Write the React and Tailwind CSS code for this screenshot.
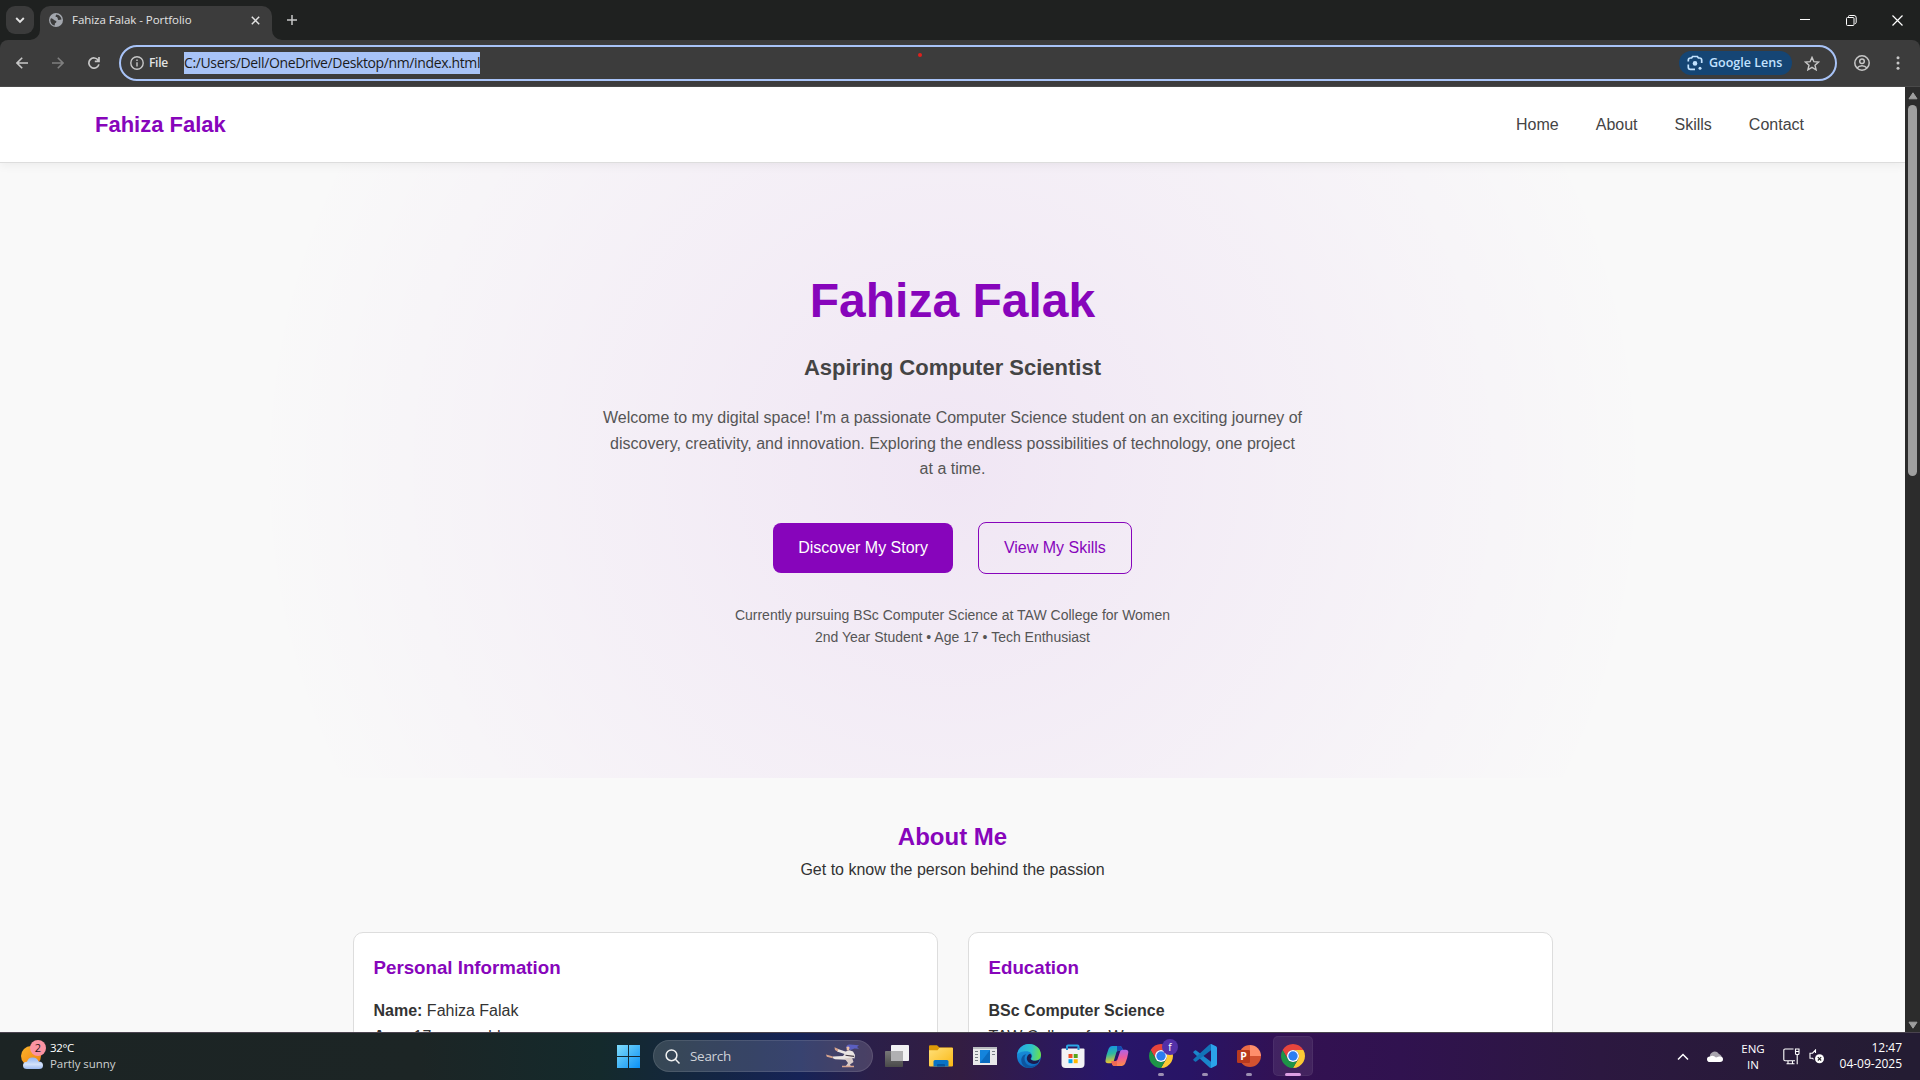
import React from "react";

const ui = "font-['Open_Sans','Noto_Sans',sans-serif]";

/* ---------- browser chrome ---------- */

function TabStrip() {
  return (
    <div className="flex h-10 items-start bg-[#1f2120]">
      <div className="ml-[6px] mt-[6px] flex h-7 w-7 items-center justify-center rounded-[9px] bg-[#3b3b3b]">
        <svg width="10" height="8" viewBox="0 0 10 8" fill="none" stroke="#e3e3e3" strokeWidth="1.9">
          <path d="M1.2 2 5 5.8 8.8 2" />
        </svg>
      </div>
      <svg className="-ml-[4px] mt-[30px] h-[10px] w-[10px]" viewBox="0 0 10 10">
        <path d="M0 10A10 10 0 0 0 10 0V10Z" fill="#3c3c3c" />
      </svg>
      <div className="mt-[6px] flex h-[34px] w-[232px] items-center rounded-t-[10px] bg-[#3c3c3c] pb-[6px]">
        <svg className="ml-[9px]" width="14" height="14" viewBox="0 0 14 14">
          <circle cx="7" cy="7" r="7" fill="#a3a7ae" />
          <path d="M2 5.2c1.5.2 2.3.9 3.2 1.8.9.8 2 .5 2.2 1.4.3 1.2-1.4 1.3-1.6 2.4-.1.9.4 1.6-.4 1.8C3.200 12 1.300 9.800 1.300 7.200c0-.8.3-1.500.7-2ZM7.200 1.400c-.3 1-.9 1.300-.6 2.200.3.800 1.500.5 2 1.300.5.900-.1 1.800 1 2.100 1.100.2 1.600-.6 2.900-.4C12.400 4 10.300 1.600 7.200 1.400Z" fill="#3c3c3c" />
        </svg>
        <span className={"ml-[9px] w-[164px] whitespace-nowrap text-[11.5px] leading-none tracking-[-0.04px] text-[#e3e3e3] " + ui}>
          Fahiza Falak - Portfolio
        </span>
        <svg className="ml-[15px]" width="9" height="9" viewBox="0 0 9 9" stroke="#e3e3e3" strokeWidth="1.5">
          <path d="m.8.8 7.400 7.400M8.200.8.8 8.200" />
        </svg>
      </div>
      <svg className="mt-[30px] h-[10px] w-[10px]" viewBox="0 0 10 10">
        <path d="M0 0A10 10 0 0 0 10 10H0Z" fill="#3c3c3c" />
      </svg>
      <svg className="ml-[5px] mt-[15px]" width="10" height="10" viewBox="0 0 10 10" stroke="#c7c7c7" strokeWidth="1.5">
        <path d="M5 0v10M0 5h10" />
      </svg>
      <div className="ml-auto flex h-10 items-center">
        <div className="flex w-[46px] justify-center">
          <svg width="10" height="10" viewBox="0 0 10 10" stroke="#fff"><path d="M0 4.500h10" /></svg>
        </div>
        <div className="flex w-[46px] justify-center">
          <svg width="11" height="11" viewBox="0 0 11 11" fill="none" stroke="#fff">
            <rect x=".5" y="2.500" width="7.500" height="8" rx="1" />
            <path d="M2.500 2.300V1.500Q2.500.5 3.500.5H8q2.200 0 2.200 2.200V7.500q0 1-1.400 1" />
          </svg>
        </div>
        <div className="flex w-[46px] justify-center">
          <svg width="11" height="11" viewBox="0 0 11 11" stroke="#fff" strokeWidth="1.200"><path d="m.5.5 10 10M10.500.5l-10 10" /></svg>
        </div>
      </div>
    </div>
  );
}

function Toolbar() {
  return (
    <div className="bg-[#1f2120]">
      <div className="flex h-[47px] items-center rounded-t-[8px] border-b border-[#4a4a4a] bg-[#3c3c3c]">
        <svg className="ml-4" width="12" height="12" viewBox="0 0 12 12" fill="none" stroke="#c7c7c7" strokeWidth="1.600">
          <path d="M12 6H1.200M6.200.8 1 6l5.200 5.200" />
        </svg>
        <svg className="ml-6" width="12" height="12" viewBox="0 0 12 12" fill="none" stroke="#7f7f7f" strokeWidth="1.600">
          <path d="M0 6h10.800M5.800.8 11 6l-5.200 5.200" />
        </svg>
        <svg className="ml-6" width="12" height="12" viewBox="0 0 12 12" fill="none" stroke="#c7c7c7" strokeWidth="1.700">
          <path d="M10.900 7.400A5.100 5.100 0 1 1 10.200 3.200M11 0v4.400H6.800" />
        </svg>
        <div className="ml-[19px] flex h-9 w-[1718px] items-center rounded-full border-2 border-[#a8c3f7]">
          <svg className="ml-[9px]" width="14" height="14" viewBox="0 0 14 14" fill="none" stroke="#c7c7c7" strokeWidth="1.400">
            <circle cx="7" cy="7" r="6.200" />
            <path d="M7 6.200V10.400M7 3.500v1.500" />
          </svg>
          <span className={"ml-[5px] w-[35px] text-[12px] font-semibold leading-none tracking-[-0.3px] text-[#e3e3e3] " + ui}>File</span>
          <span className={"flex h-[22px] w-[296px] items-center whitespace-nowrap bg-[#a8c3f7] text-[14px] leading-none tracking-[-0.37px] text-[#1b1b1b] " + ui}>
            C:/Users/Dell/OneDrive/Desktop/nm/index.html
          </span>
          <span className="-mt-[17px] ml-[438px] h-1 w-1 rounded-full bg-[#e0201c]" />
          <div className="ml-auto mr-[12px] flex h-6 w-[113px] items-center rounded-full bg-[#154574]">
            <svg className="ml-2" width="16" height="16" viewBox="0 0 16 16" fill="none" stroke="#c2e2ff" strokeWidth="1.700">
              <path d="M1.300 6.500V5.200Q1.300 3 3.500 3H4.600L5.600 1.500h4.800L11.400 3h1.100q2.200 0 2.200 2.200V8M1.300 9.500v2.700q0 2.200 2.200 2.200H8" />
              <circle cx="8" cy="8.400" r="2.300" fill="#c2e2ff" stroke="none" />
              <circle cx="13" cy="13.300" r="1.500" fill="#c2e2ff" stroke="none" />
            </svg>
            <span className={"ml-[6px] whitespace-nowrap text-[12.500px] font-semibold leading-none tracking-[0px] text-[#c2e2ff] " + ui}>Google Lens</span>
          </div>
          <svg className="mr-[15px]" width="16" height="15" viewBox="0 0 16 15" fill="none" stroke="#c7c7c7" strokeWidth="1.400">
            <path d="m8 1.400 1.900 4.300 4.700.4-3.600 3.100 1.100 4.600L8 11.300l-4.100 2.500L5 9.200 1.400 6.100l4.700-.4Z" />
          </svg>
        </div>
        <svg className="ml-[17px]" width="16" height="16" viewBox="0 0 16 16" fill="none" stroke="#c7c7c7" strokeWidth="1.500">
          <circle cx="8" cy="8" r="7.200" />
          <circle cx="8" cy="6.200" r="2.300" />
          <path d="M3 13q2-2.300 5-2.300t5 2.300" />
        </svg>
        <svg className="ml-[26px]" width="4" height="14" viewBox="0 0 4 14" fill="#c7c7c7">
          <circle cx="2" cy="1.700" r="1.500" /><circle cx="2" cy="7" r="1.500" /><circle cx="2" cy="12.300" r="1.500" />
        </svg>
      </div>
    </div>
  );
}

/* ---------- portfolio page ---------- */

const links = ["Home", "About", "Skills", "Contact"];

function Card({ title, children }) {
  return (
    <div className="h-[200px] flex-1 rounded-[10px] border border-[#ddd] bg-white px-[20px] pt-[20px]">
      <h3 className="mb-[15px] text-[18.720px] font-bold leading-[30px] text-[#8705bb]">{title}</h3>
      {children}
    </div>
  );
}

function Portfolio() {
  return (
    <div className="h-[945px] w-[1905px] overflow-hidden bg-[#f9f9f9] font-['Liberation_Sans',Arial,sans-serif] text-[16px] leading-[25.600px] text-[#333]">
      <header className="relative flex h-[76px] items-center justify-between border-b border-[#ddd] bg-white pl-[95px] pr-[101px] shadow-[0_2px_10px_rgba(0,0,0,0.06)]">
        <div className="text-[22px] font-bold text-[#8705bb]">Fahiza Falak</div>
        <nav className="flex gap-[37px] text-[#444]">
          {links.map((l) => <a key={l}>{l}</a>)}
        </nav>
      </header>

      <section className="flex h-[615px] flex-col items-center bg-[radial-gradient(circle,rgba(135,5,187,0.08)_0%,rgba(135,5,187,0)_70%)] pt-[99.500px] text-center">
        <h1 className="text-[48px] font-bold leading-[76.800px] text-[#8705bb]">Fahiza Falak</h1>
        <h2 className="mt-[11px] text-[22px] font-bold leading-[35.200px] text-[#444]">Aspiring Computer Scientist</h2>
        <p className="mt-[19.500px] w-[700px] text-[#555]">
          Welcome to my digital space! I'm a passionate Computer Science student on an exciting journey of discovery, creativity, and innovation. Exploring the endless possibilities of technology, one project at a time.
        </p>
        <div className="mt-[40.400px] flex items-center gap-[25px]">
          <a className="rounded-[8px] bg-[#8705bb] px-[25px] py-3 text-white">Discover My Story</a>
          <a className="rounded-[8px] border border-[#8705bb] px-[25px] py-3 text-[#8705bb]">View My Skills</a>
        </div>
        <p className="mt-[30px] text-[14px] leading-[22.400px] text-[#555]">
          Currently pursuing BSc Computer Science at TAW College for Women<br />
          2nd Year Student • Age 17 • Tech Enthusiast
        </p>
      </section>

      <section className="pt-[40px]">
        <h2 className="text-center text-[24px] font-bold leading-[38.400px] text-[#8705bb]">About Me</h2>
        <p className="mt-px text-center">Get to know the person behind the passion</p>
        <div className="mx-auto mt-[49px] flex w-[1200px] gap-[30px]">
          <Card title="Personal Information">
            <p><strong>Name:</strong> Fahiza Falak</p>
            <p><strong>Age:</strong> 17 years old</p>
          </Card>
          <Card title="Education">
            <p><strong>BSc Computer Science</strong></p>
            <p>TAW College for Women</p>
          </Card>
        </div>
      </section>
    </div>
  );
}

function Scrollbar() {
  return (
    <div className="flex w-[15px] flex-col items-center bg-[#2c2c2c]">
      <svg className="mt-[5px]" width="10" height="8" viewBox="0 0 10 8"><path d="M5 .8 9 6.800H1Z" fill="#9f9f9f" stroke="#9f9f9f" strokeLinejoin="round" /></svg>
      <div className="mt-[5px] h-[371px] w-[9px] rounded-full bg-[#9f9f9f]" />
      <svg className="mb-[3px] mt-auto" width="10" height="8" viewBox="0 0 10 8"><path d="M5 7.200 9 1.200H1Z" fill="#9f9f9f" stroke="#9f9f9f" strokeLinejoin="round" /></svg>
    </div>
  );
}

/* ---------- taskbar ---------- */

function Chrome() {
  return (
    <svg width="24" height="24" viewBox="0 0 24 24">
      <path d="M1.610 6A12 12 0 0 1 22.390 6H12A6 6 0 0 0 6.800 15Z" fill="#e8453c" />
      <path d="M22.390 6A12 12 0 0 1 12 24L17.200 15A6 6 0 0 0 12 6Z" fill="#fcc934" />
      <path d="M12 24A12 12 0 0 1 1.610 6L6.800 15A6 6 0 0 0 17.200 15Z" fill="#1e9447" />
      <circle cx="12" cy="12" r="6" fill="#fff" />
      <circle cx="12" cy="12" r="4.700" fill="#2c7df0" />
    </svg>
  );
}

function TaskView() {
  return (
    <svg width="24" height="22" viewBox="0 0 24 22">
      <defs><linearGradient id="tv" x2="0" y2="1"><stop stopColor="#777" /><stop offset="1" stopColor="#4a4a4a" /></linearGradient></defs>
      <rect y="6" width="18" height="16" rx=".8" fill="url(#tv)" />
      <rect x="6" width="18" height="16" rx=".8" fill="#f1f1f3" />
      <path d="M6 6h12v10H6Z" fill="#b0b0b2" />
    </svg>
  );
}

function Explorer() {
  return (
    <svg width="24" height="22" viewBox="0 0 24 22">
      <defs><linearGradient id="ex" x2="1" y2="1"><stop stopColor="#ffe07a" /><stop offset="1" stopColor="#fbb814" /></linearGradient></defs>
      <path d="M0 1.200Q0 .3 1 .3H8L10.500 2.500H23Q24 2.500 24 3.500V8H0Z" fill="#dd9a08" />
      <path d="M0 5.200H8.500L10.500 2.700H23Q24 2.700 24 3.700V20.500Q24 21.500 23 21.500H1Q0 21.500 0 20.500Z" fill="url(#ex)" />
      <path d="M4.500 21.500V16.500Q4.500 15 6 15H18Q19.500 15 19.500 16.500V21.500Z" fill="#0a73c4" />
      <path d="M8 21.500V20Q8 19 9 19H15Q16 19 16 20V21.500Z" fill="#07559c" />
    </svg>
  );
}

function Snapshot() {
  return (
    <svg width="24" height="18" viewBox="0 0 24 18">
      <rect width="24" height="18" fill="#e9e9ea" />
      <path d="M0 0h24v2H0Z" fill="#b9bcbf" />
      <path d="M2 4.500h3M2 7.500h3M2 10.500h3M2 13.500h3M19 4.500h3M19 7.500h3" stroke="#777d83" />
      <rect x="7" y="3" width="10" height="13" fill="#1484dc" />
      <path d="M7 16 17 3V16Z" fill="#0b6cc0" />
    </svg>
  );
}

function Edge() {
  return (
    <svg width="24" height="24" viewBox="0 0 24 24">
      <defs>
        <linearGradient id="e1" x1="0" y1=".3" x2="1" y2=".4"><stop stopColor="#23a7e8" /><stop offset=".6" stopColor="#2fc3c8" /><stop offset="1" stopColor="#6be04a" /></linearGradient>
        <linearGradient id="e2" x1="0" y1="0" x2=".3" y2="1"><stop stopColor="#1b9de2" /><stop offset="1" stopColor="#0f6cc4" /></linearGradient>
      </defs>
      <circle cx="12" cy="12" r="12" fill="url(#e2)" />
      <path d="M.2 10.500C1 4.500 5.800 0 12 0 19 0 24 5 24 10.800c0 3.600-2.600 6-5.900 6-2.700 0-4-1-4-1.900 0-.8 1.100-1.200 1.100-3 0-2.300-2.200-4.600-6-4.600C5 7.300 1.200 8.800.2 10.500Z" fill="url(#e1)" />
      <path d="M9.200 10.200c-2.500 2.300-2.200 7.600 1.200 10.300 3.200 2.600 8.400 1.700 11.800-1.900C20 22 16.400 24 12.300 24 7 24 4.300 19.800 4.300 16.200c0-3.500 2.300-5.700 4.900-6Z" fill="#0d559f" />
      <path d="M13 9.700c1.700.9 2 2.800.9 4.200-.8 1 .2 2.600 4.200 2.900 2 .1 3.700-.7 4.700-1.700-.5 2.200-1.800 4-2.600 4.100-3 1.500-8.500.6-10-3-1-2.600.3-5.400 2.800-6.500Z" fill="#1c1b4e" />
    </svg>
  );
}

function Store() {
  return (
    <svg width="24" height="24" viewBox="0 0 24 24">
      <path d="M6 6V2.500Q6 1.500 7 1.500H16.500Q17.500 1.500 17.500 2.500V6" fill="none" stroke="#2ba7e6" strokeWidth="2" />
      <path d="M.5 5.500Q.5 4.500 1.500 4.500H22.500Q23.500 4.500 23.500 5.500V20Q23.500 24 19.500 24H4.500Q.5 24 .5 20Z" fill="#f3f3f5" />
      <path d="M6 3.500V6M17.500 3.500V6" stroke="#1e8fd0" strokeWidth="2" />
      <path d="M7.500 10H11.500V14H7.500Z" fill="#f25022" /><path d="M12.700 10H16.700V14H12.700Z" fill="#58a618" />
      <path d="M7.500 15.200H11.500V19.200H7.500Z" fill="#00a4ef" /><path d="M12.700 15.200H16.700V19.200H12.700Z" fill="#ffb900" />
    </svg>
  );
}

function Copilot() {
  return (
    <svg width="24" height="22" viewBox="0 0 24 22">
      <defs>
        <linearGradient id="c1" x2=".2" y2="1"><stop stopColor="#1390ee" /><stop offset=".5" stopColor="#2fb8a0" /><stop offset="1" stopColor="#f4c22a" /></linearGradient>
        <linearGradient id="c2" x2=".1" y2="1"><stop stopColor="#a366f5" /><stop offset=".55" stopColor="#ee5a9c" /><stop offset="1" stopColor="#fb8a4d" /></linearGradient>
      </defs>
      <path d="M7 1H14.500Q16.600 1 17.200 3L17.800 5.500H13.500Q12 5.500 11.500 7L8.600 16.500Q8 18.300 6 18.300H3Q.2 18.300.5 15.500 1.300 9.500 3.600 3.700 4.700 1 7 1Z" fill="url(#c1)" />
      <path d="M12 1H14.500Q16.600 1 17.200 3L18 5.800H14Q12.500 5.800 12 7Z" fill="#1748b5" />
      <path d="M17 21H9.500Q7.600 21 7 19L6.200 16.300H10.200Q11.800 16.300 12.300 14.800L15.200 6.200Q15.700 4.700 17.600 4.700H20.700Q23.500 4.700 23.300 7.500 22.500 13 20.300 18.300 19.200 21 17 21Z" fill="url(#c2)" />
      <path d="M12 21H9.500Q7.600 21 7 19L6.200 16.300H10.200Q11.500 16.300 12 15Z" fill="#ef6a52" />
    </svg>
  );
}

function VSCode() {
  return (
    <svg width="24" height="24" viewBox="0 0 24 24">
      <path d="M.4 7.800 1.900 6.500Q2.500 6 3.200 6.500L18 17.800V23.800Q17 23.900 16.300 23.200L.4 8.800Q0 8.300.4 7.800Z" fill="#1a86cc" />
      <path d="M.4 16.200 1.900 17.500Q2.500 18 3.200 17.500L18 6.200V.2Q17 .1 16.300.8L.4 15.200Q0 15.700.4 16.200Z" fill="#1273b8" />
      <path d="M17 23.800C17.700 24.200 18 23.200 18 22.800V1.200C18 .7 17.500 0 16.800.3L18.200.1 23 2.300Q24 2.800 24 3.900V20.100Q24 21.200 23 21.700L18.300 23.900Z" fill="#2ba3ea" />
    </svg>
  );
}

function PowerPoint() {
  return (
    <svg width="24" height="22" viewBox="0 0 24 22">
      <path d="M13 0A11 11 0 0 0 2 11L13 13Z" fill="#ed6c47" />
      <path d="M13 0A11 11 0 0 1 24 11L18 14 13 11Z" fill="#ff8f6b" />
      <path d="M2 11A11 11 0 0 0 24 11Z" fill="#d35230" />
      <rect y="5" width="13" height="13" rx="1.200" fill="#b93a1e" />
      <text x="3.200" y="15.300" fontSize="10.500" fontWeight="700" fill="#fff" fontFamily="Open Sans, sans-serif">P</text>
    </svg>
  );
}

function Cell({ children, dot, active }) {
  return (
    <div className={"relative flex h-10 w-10 items-center justify-center rounded-[5px] " + (active ? "bg-white/8 ring-1 ring-inset ring-white/5" : "")}>
      {children}
      {dot && <span className="absolute bottom-0 h-[3px] w-[6px] rounded-full bg-[#9c8fb3]" />}
      {active && <span className="absolute bottom-0 h-[3px] w-4 rounded-full bg-[#dd9fe3]" />}
    </div>
  );
}

function Kicker() {
  return (
    <svg width="34" height="24" viewBox="0 0 34 24">
      <path d="M20 3.500Q20.500.3 24 .6L33 1.200 31 3 33 4.800 28.500 4.600 24.500 6Z" fill="#5b5fc0" />
      <path d="M20.500 3Q22.500 1.800 23.500 3.500L23 6.500H20.800Z" fill="#e9bfa6" />
      <path d="M12 5 19.500 7.400 23.500 6.300 27 7.500 29 11 28.500 14.500 26.500 14 25.500 15.500 20 15.800 9 15.200 6.500 14 7 12.500 17 12 18.500 10 11 7.500Z" fill="#ebe6e4" />
      <path d="M18.500 14.500 26 13.500 27.500 18 24 20.500 25 22.500 19.500 22.500 22 19Z" fill="#d8cbc8" />
      <path d="M8.500 3.200 12.500 5 11.500 7.500 9 6ZM0 10.500 7 12.500 6.500 14.200.8 12.800ZM16 21.800 28 21.800 28 23.300H16Z" fill="#d9a58e" />
      <path d="M19.500 11.200 28 12.400" stroke="#453a44" strokeWidth="1.100" />
    </svg>
  );
}

function Taskbar() {
  return (
    <div className={"flex h-12 items-center border-t border-[#4a434f] bg-[linear-gradient(90deg,#1c2424_0px,#1c2525_420px,#142a2c_600px,#142545_720px,#162357_800px,#2b1f49_870px,#331d42_960px,#28166a_1110px,#281465_1190px,#331152_1290px,#30124f_1400px,#2c1840_1600px,#241c33_1900px)] " + ui}>
      <div className="flex w-[608px] items-center">
        <svg className="-mt-[3px] ml-5" width="28" height="34" viewBox="0 0 28 34">
          <defs><linearGradient id="sun" x2="1" y2="1"><stop stopColor="#fbb52a" /><stop offset="1" stopColor="#f07f12" /></linearGradient>
            <linearGradient id="cl" x2="0" y2="1"><stop stopColor="#8fb4f3" /><stop offset=".6" stopColor="#d5e3fb" /><stop offset="1" stopColor="#9dbbf2" /></linearGradient></defs>
          <circle cx="11" cy="18" r="10" fill="url(#sun)" />
          <path d="M7 31Q3 31 3 27.500 3 24 7 23.800 8.500 19 13 19.500 17 19.500 18.500 23.500 23 23.500 23 27.500 23 31 19 31Z" fill="url(#cl)" />
          <circle cx="18" cy="10" r="8" fill="#fb93a2" />
          <text x="18" y="14" textAnchor="middle" fontSize="11" fill="#2b1518" fontFamily="Open Sans, sans-serif">2</text>
        </svg>
        <div className="-mt-[2px] ml-[2px] whitespace-nowrap text-[11.500px] leading-[16px] text-white">
          <div className="tracking-[-0.35px]">32°C</div>
          <div className="tracking-[-0.07px] text-[#cdd0d0]">Partly sunny</div>
        </div>
      </div>
      <Cell>
        <svg width="23" height="23" viewBox="0 0 23 23">
          <defs><linearGradient id="win" x2="1" y2="1"><stop stopColor="#7fdcfb" /><stop offset="1" stopColor="#0a90f5" /></linearGradient></defs>
          <path d="M0 0H11V11H0ZM12 0H23V11H12ZM0 12H11V23H0ZM12 12H23V23H12Z" fill="url(#win)" />
        </svg>
      </Cell>
      <div className="-mt-px ml-[5px] flex h-8 w-[220px] items-center rounded-full border border-white/10 bg-white/15 pl-[11px]">
        <svg width="15" height="15" viewBox="0 0 15 15" fill="none" stroke="#f2f2f2" strokeWidth="1.500"><circle cx="6.500" cy="6.300" r="5.400" /><path d="m10.400 10.300 4.100 4.200" /></svg>
        <span className="ml-[10px] text-[13.500px] tracking-[-0.3px] text-[#cfd2d8]">Search</span>
        <span className="ml-auto mr-[12px]"><Kicker /></span>
      </div>
      <div className="-mt-px ml-1 flex gap-1">
        <Cell><TaskView /></Cell>
        <Cell><Explorer /></Cell>
        <Cell><Snapshot /></Cell>
        <Cell><Edge /></Cell>
        <Cell><Store /></Cell>
        <Cell><Copilot /></Cell>
        <Cell dot>
          <Chrome />
          <span className="absolute left-[21px] top-[3px] flex h-4 w-4 items-center justify-center rounded-full bg-[#5330a8] text-[10px] leading-none text-white">f</span>
        </Cell>
        <Cell dot><VSCode /></Cell>
        <Cell dot><PowerPoint /></Cell>
        <Cell active><Chrome /></Cell>
      </div>
      <div className="ml-auto flex items-center text-[11.500px] leading-[16px] text-white">
        <svg width="12" height="8" viewBox="0 0 12 8" fill="none" stroke="#fff" strokeWidth="1.500"><path d="M1 6.500 6 1.500 11 6.500" /></svg>
        <svg className="ml-[18px]" width="16" height="11" viewBox="0 0 16 11">
          <path d="M3 8Q2 3 5 1.500 9-1 12 3 15 4 15 8Z" fill="#a8a4ae" />
          <path d="M3 11Q0 11 0 8.200 0 5.500 3 5.500 6 3.500 9 6.500L12 5.500Q16 5 16 8.300 16 11 13 11Z" fill="#fff" />
        </svg>
        <div className="ml-[17px] w-[26px] text-center">ENG<br />IN</div>
        <svg className="ml-[17px]" width="17" height="17" viewBox="0 0 17 17" fill="none" stroke="#fff" strokeWidth="1.100">
          <path d="M10.500 1H2Q.8 1 .8 2.200V11.500Q.8 12.700 2 12.700H12M5 12.700V15.500M9.500 12.700V15.500M3.500 15.800H11.500M12.500 1H16V5.500Q16 6.500 15 6.500H13.500Q12.500 6.500 12.500 5.500ZM14.200 6.500V16.200M12.500 3.500H16" />
        </svg>
        <svg className="ml-[9px]" width="16" height="15" viewBox="0 0 16 15" fill="none" stroke="#fff" strokeWidth="1.100">
          <path d="M6.500 4V1L3.500 4.200H1V9.200H3.500L4.500 10.300" />
          <circle cx="10.500" cy="9.800" r="4.500" fill="#fff" stroke="none" />
          <path d="m8.800 8.100 3.400 3.400M12.200 8.100l-3.400 3.400" stroke="#222" />
        </svg>
        <div className="-mt-[2px] ml-[13px] mr-[18px] w-[64px] whitespace-nowrap text-right text-[12px] tracking-[-0.02px]">12:47<br />04-09-2025</div>
      </div>
    </div>
  );
}

export default function App() {
  return (
    <div className="flex h-[1080px] w-[1920px] flex-col overflow-hidden bg-[#1f2120]">
      <TabStrip />
      <Toolbar />
      <main className="flex h-[945px]">
        <Portfolio />
        <Scrollbar />
      </main>
      <Taskbar />
    </div>
  );
}
